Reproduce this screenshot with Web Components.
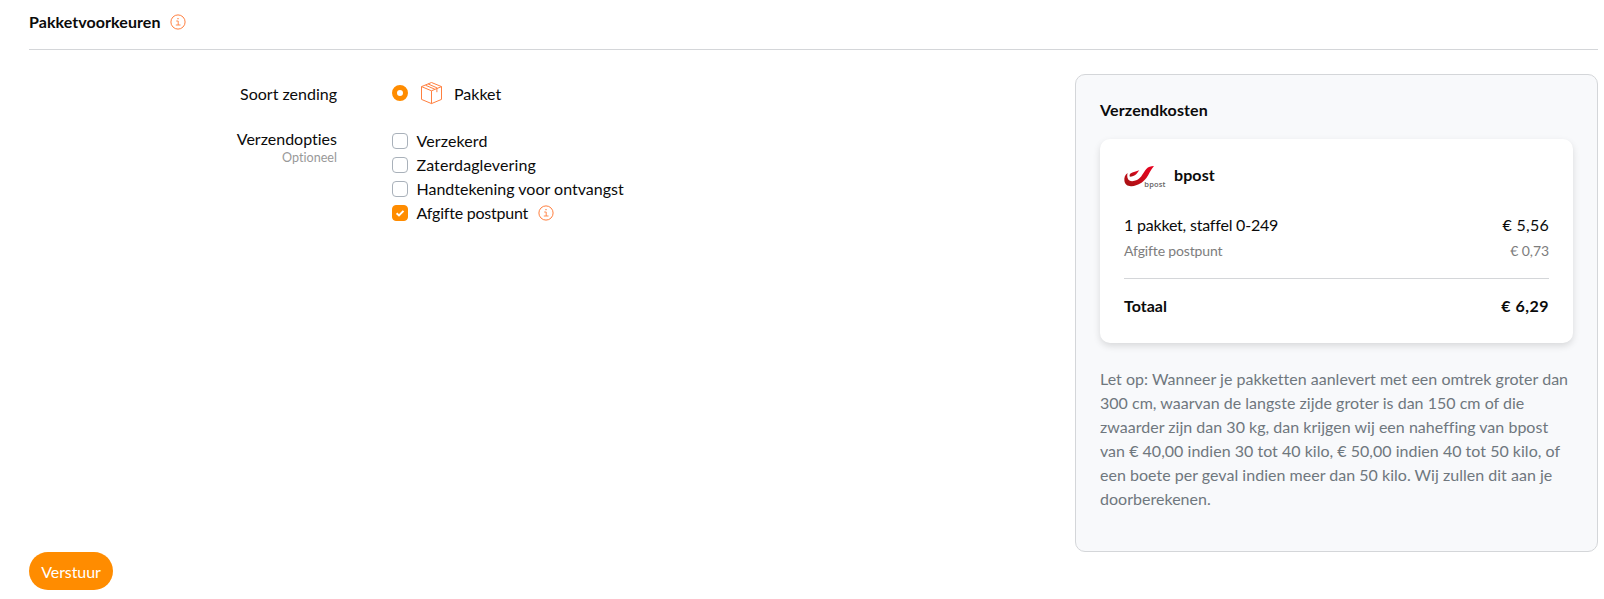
<!DOCTYPE html>
<html lang="nl">
<head>
<meta charset="utf-8">
<title>Pakketvoorkeuren</title>
<style>
  body {
    margin: 0;
    background: #fff;
    color: #0b0b0b;
    font: 16px/24px Lato, "Open Sans", sans-serif;
    font-variant-ligatures: none;
    --accent: #ff8c00;
    --line: #d4d6d9;
    --muted: #6f777e;
  }
</style>
</head>
<body>

<shipment-page>
  <section-header slot="header">Pakketvoorkeuren</section-header>

  <form-row label="Soort zending">
    <radio-option>Pakket</radio-option>
  </form-row>
  <form-row label="Verzendopties" hint="Optioneel" class="options">
    <check-option style="letter-spacing:.11px">Verzekerd</check-option>
    <check-option style="letter-spacing:.1px">Zaterdaglevering</check-option>
    <check-option>Handtekening voor ontvangst</check-option>
    <check-option checked info style="letter-spacing:-.22px">Afgifte postpunt</check-option>
  </form-row>

  <cost-panel slot="aside" heading="Verzendkosten">
    <cost-card carrier="bpost">
      <cost-line amount="€ 5,56" style="letter-spacing:-.2px;--amount-spacing:.28px">1 pakket, staffel 0-249</cost-line>
      <cost-line kind="small" amount="€ 0,73" style="letter-spacing:-.15px;--amount-spacing:-.1px">Afgifte postpunt</cost-line>
      <cost-line kind="total" amount="€ 6,29" style="--amount-spacing:.5px">Totaal</cost-line>
    </cost-card>
    <span slot="note">Let op: Wanneer je pakketten aanlevert met een omtrek groter dan 300 cm, waarvan de langste zijde groter is dan 150 cm of die zwaarder zijn dan 30 kg, dan krijgen wij een naheffing van bpost van € 40,00 indien 30 tot 40 kilo, € 50,00 indien 40 tot 50 kilo, of een boete per geval indien meer dan 50 kilo. Wij zullen dit aan je doorberekenen.</span>
  </cost-panel>

  <submit-button slot="footer">Verstuur</submit-button>
</shipment-page>

<script>
// small helper: open shadow root filled with the given markup
function render(el, html) {
  el.attachShadow({ mode: "open" }).innerHTML = html;
}

class ShipmentPage extends HTMLElement {
  connectedCallback() {
    render(this, `
      <style>
        :host { display: block; padding: 0 6px 0 29px; }
        .body { display: flex; justify-content: space-between; padding-top: 24px; }
        .form { display: flex; flex-direction: column; gap: 21px; padding-top: 8px; }
      </style>
      <slot name="header"></slot>
      <div class="body">
        <div class="form"><slot></slot></div>
        <slot name="aside"></slot>
      </div>
      <slot name="footer"></slot>
    `);
  }
}

class InfoIcon extends HTMLElement {
  connectedCallback() {
    render(this, `
      <style>
        :host { display: block; width: 16px; height: 16px; }
        svg { display: block; }
      </style>
      <svg width="16" height="16" viewBox="0 0 16 16" fill="none" stroke="#ff7f3f">
        <circle cx="8" cy="8" r="7.1" stroke-width="1"/>
        <path d="M6.2 7h2v4M5.8 11h4.700" stroke-width=".9"/>
        <path d="M7.400 4.700h1.200" stroke-width="1.200"/>
      </svg>
    `);
  }
}

class SectionHeader extends HTMLElement {
  connectedCallback() {
    render(this, `
      <style>
        :host {
          display: flex; align-items: center; gap: 9px;
          padding: 10px 0 15px;
          border-bottom: 1px solid var(--line);
          font-weight: 700;
          letter-spacing: .07px;
        }
      </style>
      <slot></slot>
      <info-icon></info-icon>
    `);
  }
}

class FormRow extends HTMLElement {
  connectedCallback() {
    const hint = this.getAttribute("hint");
    render(this, `
      <style>
        :host { display: flex; gap: 55px; }
        .label { width: 308px; text-align: right; }
        .hint { margin-top: -1px; font-size: 12.6px; line-height: 15px; color: #999; }
        .field { display: flex; flex-direction: column; }
        :host(.options) .field { padding-top: 2px; }
      </style>
      <div class="label">
        <div>${this.getAttribute("label")}</div>
        ${hint ? `<div class="hint">${hint}</div>` : ""}
      </div>
      <div class="field"><slot></slot></div>
    `);
  }
}

class RadioOption extends HTMLElement {
  connectedCallback() {
    render(this, `
      <style>
        :host { display: flex; align-items: center; height: 24px; }
        .dot {
          box-sizing: border-box; width: 16px; height: 16px; margin-top: -2px;
          border: 5px solid var(--accent); border-radius: 50%;
        }
        svg { margin: -2px 11px 0 12px; }
      </style>
      <span class="dot"></span>
      <svg width="23" height="24" viewBox="0 0 23 24" fill="none" stroke="#ff8040" stroke-width="1" stroke-linejoin="round">
        <path d="M11.5 1.500 21.500 5.600V18.400L11.500 22.600 1.500 18.400V5.600Z"/>
        <path d="M1.500 5.600 11.500 9.800 21.500 5.600M11.500 9.800V22.600"/>
        <path d="M5.600 4.300 14.800 8.200M8.200 3 16.900 6.800V11.200"/>
      </svg>
      <slot></slot>
    `);
  }
}

class CheckOption extends HTMLElement {
  connectedCallback() {
    render(this, `
      <style>
        :host { display: flex; align-items: center; height: 24px; }
        .box {
          box-sizing: border-box; width: 16px; height: 16px; margin-right: 8.500px;
          border: 1px solid #a9b1ba; border-radius: 4px;
        }
        :host([checked]) .box { border-color: var(--accent); background: var(--accent); }
        svg { display: block; }
        info-icon { margin-left: 10px; }
      </style>
      <span class="box">${this.hasAttribute("checked") ? `
        <svg width="14" height="14" viewBox="0 0 14 14" fill="none" stroke="#fff" stroke-width="2">
          <path d="M3.6 7.2 6 9.4 10.5 4.9"/>
        </svg>` : ""}</span>
      <slot></slot>
      ${this.hasAttribute("info") ? "<info-icon></info-icon>" : ""}
    `);
  }
}

class CostPanel extends HTMLElement {
  connectedCallback() {
    render(this, `
      <style>
        :host {
          display: block; box-sizing: border-box; width: 523px; height: 478px;
          padding: 23px 24px;
          border: 1px solid var(--line); border-radius: 10px;
          background: #f8f9fb;
        }
        .heading { font-weight: 700; letter-spacing: .15px; margin-bottom: 17px; }
        .note { margin-top: 24px; color: var(--muted); letter-spacing: .02px; }
      </style>
      <div class="heading">${this.getAttribute("heading")}</div>
      <slot></slot>
      <div class="note"><slot name="note"></slot></div>
    `);
  }
}

class BpostLogo extends HTMLElement {
  connectedCallback() {
    render(this, `
      <style>
        :host { display: block; width: 42px; height: 24px; }
        svg { display: block; }
        text { font: 600 7.5px "Open Sans", sans-serif; letter-spacing: 0; }
      </style>
      <svg width="42" height="24" viewBox="0 0 42 24">
        <defs>
          <linearGradient id="red" x1="0" y1="1" x2="1" y2="0">
            <stop offset="0" stop-color="#a31212"/>
            <stop offset=".6" stop-color="#d5091c"/>
            <stop offset="1" stop-color="#e8001f"/>
          </linearGradient>
        </defs>
        <path fill="url(#red)" d="M3.600 8C1 9.500 0 12.800 .4 15.800C.8 19.500 3.600 21.400 7.500 21.200C14 20.800 19 17.400 22.400 13C25 9.400 26.600 4.800 30 1C26.600 1 24.400 1.700 22.300 4C19.500 7.200 17.500 12.800 13 15C9.200 16.700 5 16.800 3.800 13.600C3.100 11.800 3.100 9.800 3.600 8Z"/>
        <path fill="url(#red)" d="M5.700 11.600C5.300 9.400 6 8.300 8.400 7.500L15.300 5.200C13.500 7.200 12.800 9.200 10.400 10.500C8.900 11.400 7.300 11.800 5.700 11.600Z"/>
        <text x="20.300" y="21.500" fill="#666" textLength="21.200">bpost</text>
      </svg>
    `);
  }
}

class CostCard extends HTMLElement {
  connectedCallback() {
    render(this, `
      <style>
        :host {
          display: block; box-sizing: border-box; height: 204px;
          padding: 24px 24px 0;
          border-radius: 10px; background: #fff;
          box-shadow: 0 3px 7px rgba(0, 0, 0, .13);
        }
        .carrier {
          display: flex; gap: 8px; height: 24px;
          margin-bottom: 26px;
          font-weight: 700; letter-spacing: .1px;
        }
        bpost-logo { margin-top: 2px; }
      </style>
      <div class="carrier">
        <bpost-logo></bpost-logo>
        <span>${this.getAttribute("carrier")}</span>
      </div>
      <slot></slot>
    `);
  }
}

class CostLine extends HTMLElement {
  connectedCallback() {
    render(this, `
      <style>
        :host { display: flex; justify-content: space-between; }
        :host([kind="small"]) { margin-top: 2px; font-size: 14px; color: #7d7d7d; }
        :host([kind="total"]) {
          margin-top: 15px; padding-top: 15px;
          border-top: 1px solid var(--line);
          font-weight: 700;
        }
        .amount { letter-spacing: var(--amount-spacing, 0); }
      </style>
      <span><slot></slot></span>
      <span class="amount">${this.getAttribute("amount")}</span>
    `);
  }
}

class SubmitButton extends HTMLElement {
  connectedCallback() {
    render(this, `
      <style>
        :host { display: flex; }
        button {
          height: 38px; padding: 1px 12px 0; width: 84px;
          border: 0; border-radius: 19px;
          background: var(--accent); color: #fff;
          font: inherit; letter-spacing: -.1px;
        }
      </style>
      <button type="button"><slot></slot></button>
    `);
  }
}

customElements.define("info-icon", InfoIcon);
customElements.define("bpost-logo", BpostLogo);
customElements.define("shipment-page", ShipmentPage);
customElements.define("section-header", SectionHeader);
customElements.define("form-row", FormRow);
customElements.define("radio-option", RadioOption);
customElements.define("check-option", CheckOption);
customElements.define("cost-panel", CostPanel);
customElements.define("cost-card", CostCard);
customElements.define("cost-line", CostLine);
customElements.define("submit-button", SubmitButton);
</script>
</body>
</html>
